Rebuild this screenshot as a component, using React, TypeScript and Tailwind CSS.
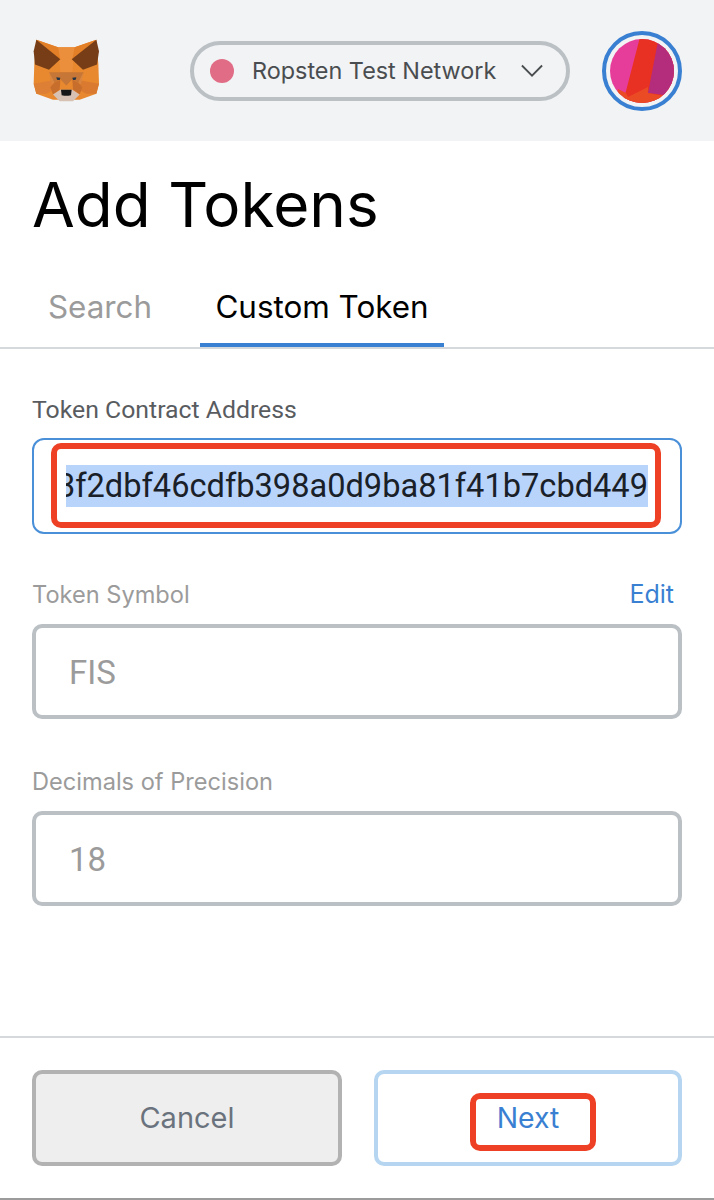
const FoxLogo = () => (
  <svg viewBox="40 26 198 188" className="h-[63px] w-[66px] shrink-0">
    {/* face base */}
    <polygon points="50,28 115,50 165,50 230,28 236,100 238,160 230,190 180,208 100,208 50,190 42,160 44,100" fill="#e8892f" />
    <polygon points="115,50 165,50 158,125 122,125" fill="#eb8f3c" />
    <polygon points="50,28 115,50 122,88" fill="#e37f27" />
    <polygon points="230,28 165,50 158,88" fill="#e37f27" />
    {/* ears */}
    <polygon points="50,28 122,86 88,118 46,102 42,62" fill="#763d16" />
    <polygon points="230,28 156,86 190,118 232,102 238,62" fill="#763d16" />
    {/* cheeks */}
    <polygon points="42,160 96,150 104,176 80,190 50,190" fill="#dd7f34" />
    <polygon points="238,160 184,150 176,176 200,190 230,190" fill="#d97a30" />
    {/* brow */}
    <polygon points="88,125 192,125 176,156 158,146 140,166 122,146 104,156" fill="#c67636" />
    <polygon points="88,125 104,156 96,162" fill="#d98540" />
    <polygon points="192,125 176,156 184,162" fill="#d98540" />
    {/* eyes */}
    <polygon points="110,140 122,142 120,149 112,148" fill="#233447" />
    <polygon points="170,140 158,142 160,149 168,148" fill="#233447" />
    {/* muzzle */}
    <polygon points="122,148 140,166 158,148 160,178 120,178" fill="#e8892f" />
    <polygon points="104,156 122,148 120,178 100,192 92,170" fill="#c86e2d" />
    <polygon points="176,156 158,148 160,178 180,192 188,170" fill="#c86e2d" />
    <polygon points="100,192 122,178 158,178 180,192 160,212 120,212" fill="#d7c1b3" />
    <polygon points="124,178 156,178 154,194 146,196 134,196 126,194" fill="#161616" />
  </svg>
);

const Avatar = () => (
  <div className="ml-[32px] size-20 shrink-0 rounded-full border-4 border-[#3a80d2] p-1">
    <svg viewBox="0 0 64 64" className="block size-full rounded-full">
      <rect width="64" height="64" fill="#e73d9a" />
      <polygon points="30,-2 66,-2 66,70 10,70 16,52" fill="#e83122" />
      <polygon points="48,2 70,2 70,58 38,54" fill="#b42d7c" />
      <polygon points="8,50 16,54 18,58 38,48 38,54 60,58 60,70 4,70" fill="#ea4b25" />
    </svg>
  </div>
);

const Field = ({ label, value, action, className }: { label: string; value: string; action?: string; className: string }) => (
  <div className={className}>
    <div className="flex h-8 items-center justify-between pr-2 font-['Inter',sans-serif]">
      <label className="text-[23.6px] text-[#9b9b9b]">{label}</label>
      {action && <span className="text-[25px] text-[#3a80d2]">{action}</span>}
    </div>
    <div className="mt-[13px] flex h-[95px] items-center rounded-[10px] border-4 border-[#bbc0c5] pl-[33px] pt-[3px] text-[33px] text-[#9b9b9b]">
      {value}
    </div>
  </div>
);

export default function App() {
  return (
    <div className="relative h-[1200px] w-[714px] overflow-hidden bg-white font-['Roboto',sans-serif]">
      <header className="flex h-[141px] items-center bg-[#f2f3f4] pl-[33px]">
        <FoxLogo />
        <div className="ml-[91px] flex h-[60px] w-[380px] items-center rounded-full border-4 border-[#bbc0c5] pl-4 pr-[23px]">
          <span className="size-6 rounded-full bg-[#e06c85]" />
          <span className="ml-[18px] whitespace-nowrap font-['Inter',sans-serif] text-[23.4px] text-[#4a4d50]">
            Ropsten Test Network
          </span>
          <svg viewBox="0 0 24 14" className="ml-auto h-[14px] w-[22px]" fill="none" stroke="#4a4d50" strokeWidth="2">
            <path d="M1 1l11 11L23 1" />
          </svg>
        </div>
        <Avatar />
      </header>

      <h1 className="mt-[26px] pl-[32px] font-['Inter',sans-serif] text-[62px] leading-[76px] text-black">
        Add Tokens
      </h1>

      <div className="mt-[30px] flex h-[76px] border-b-2 border-[#d6d9dc] pl-[16px] font-['Inter',sans-serif] text-[31.4px]">
        <div className="flex w-[168px] justify-center pt-[12px] leading-[44px] text-[#9b9b9b]">Search</div>
        <div className="ml-[16px] flex w-[244px] justify-center border-b-4 border-[#3a80d2] pt-[12px] leading-[44px] text-black">
          Custom Token
        </div>
      </div>

      <main className="px-[32px] pt-[47px]">
        <label className="block h-7 text-[24.8px] leading-7 text-[#595c5f]">Token Contract Address</label>
        <div className="mt-[14px] flex h-[96px] rounded-[12px] border-2 border-[#4a90d9] pb-1 pl-[17px] pr-[19px] pt-[3px]">
          <div className="flex w-full items-center rounded-[10px] border-[6px] border-[#ee4025] pl-[9px] pr-[7px]">
            <div className="flex w-full justify-end overflow-hidden">
              <span className="whitespace-nowrap bg-[#b8d4fb] text-[32.6px] leading-[42px] text-[#1a2027]">
                3f2dbf46cdfb398a0d9ba81f41b7cbd449
              </span>
            </div>
          </div>
        </div>

        <Field className="mt-[45px]" label="Token Symbol" value="FIS" action="Edit" />
        <Field className="mt-[47px]" label="Decimals of Precision" value="18" />
      </main>

      <footer className="absolute inset-x-0 top-[1036px] flex gap-[32px] border-t-2 border-[#d6d9dc] px-[32px] pt-[32px] font-['Inter',sans-serif] text-[28.4px]">
        <button className="flex h-[96px] w-[310px] items-center justify-center rounded-[10px] border-4 border-[#b2b2b2] bg-[#eeeeee] text-[29px] text-[#6a737d]">
          Cancel
        </button>
        <button className="flex h-[96px] w-[308px] items-center justify-center rounded-[10px] border-4 border-[#b6d5f0] bg-white text-[#3a80d2]">
          <span className="relative">
            Next
            <span className="absolute left-[-27px] right-[-37px] top-[calc(50%+4px)] h-[58px] -translate-y-1/2 rounded-[10px] border-[6px] border-[#ee4025]" />
          </span>
        </button>
      </footer>
      <div className="absolute inset-x-0 bottom-0 h-[2px] bg-[#9b9b9b]" />
    </div>
  );
}
